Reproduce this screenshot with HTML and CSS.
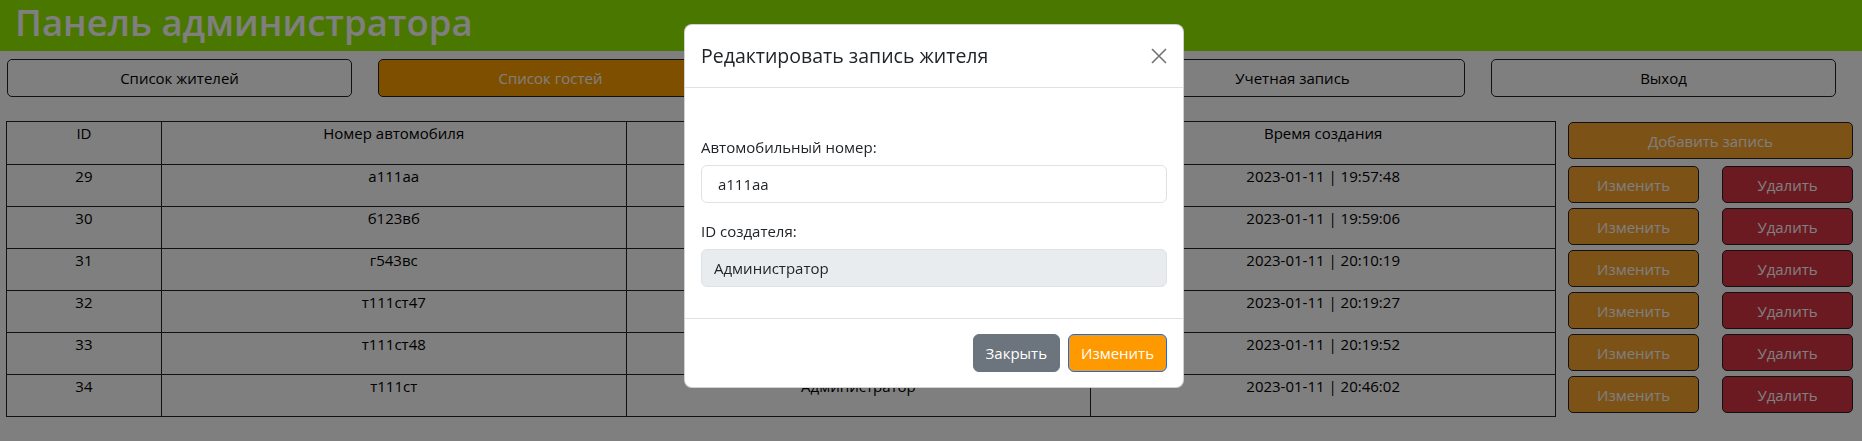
FILE: index.html
```html
<!DOCTYPE html>
<html lang="ru">
<head>
<meta charset="utf-8">
<title>Панель администратора</title>
<link rel="stylesheet" href="styles.css">
</head>
<body>
<header class="topbar"><h1 class="title">Панель администратора</h1></header>
<nav class="menu">
  <button class="menu-btn">Список жителей</button>
  <button class="menu-btn active">Список гостей</button>
  <button class="menu-btn">Администраторы</button>
  <button class="menu-btn">Учетная запись</button>
  <button class="menu-btn">Выход</button>
</nav>
<main class="content">
  <table class="records">
    <thead>
      <tr><th class="col-id">ID</th><th class="col-wide">Номер автомобиля</th><th class="col-wide">ID создателя</th><th class="col-wide">Время создания</th></tr>
    </thead>
    <tbody>
      <tr><td>29</td><td>а111аа</td><td>Администратор</td><td>2023-01-11 | 19:57:48</td></tr>
      <tr><td>30</td><td>б123вб</td><td>Администратор</td><td>2023-01-11 | 19:59:06</td></tr>
      <tr><td>31</td><td>г543вс</td><td>Администратор</td><td>2023-01-11 | 20:10:19</td></tr>
      <tr><td>32</td><td>т111ст47</td><td>Администратор</td><td>2023-01-11 | 20:19:27</td></tr>
      <tr><td>33</td><td>т111ст48</td><td>Администратор</td><td>2023-01-11 | 20:19:52</td></tr>
      <tr><td>34</td><td>т111ст</td><td>Администратор</td><td>2023-01-11 | 20:46:02</td></tr>
    </tbody>
  </table>
  <aside class="actions">
    <button class="act-btn add">Добавить запись</button>
    <div class="act-row"><button class="act-btn edit">Изменить</button><button class="act-btn del">Удалить</button></div>
    <div class="act-row"><button class="act-btn edit">Изменить</button><button class="act-btn del">Удалить</button></div>
    <div class="act-row"><button class="act-btn edit">Изменить</button><button class="act-btn del">Удалить</button></div>
    <div class="act-row"><button class="act-btn edit">Изменить</button><button class="act-btn del">Удалить</button></div>
    <div class="act-row"><button class="act-btn edit">Изменить</button><button class="act-btn del">Удалить</button></div>
    <div class="act-row"><button class="act-btn edit">Изменить</button><button class="act-btn del">Удалить</button></div>
  </aside>
</main>

<div class="backdrop"></div>
<div class="modal">
  <div class="modal-dialog">
    <div class="modal-content">
      <div class="modal-header">
        <h5 class="modal-title">Редактировать запись жителя</h5>
        <button class="btn-close" aria-label="Закрыть">
          <svg width="16" height="16" viewBox="0 0 16 16"><path d="M1 1 L15 15 M15 1 L1 15" stroke="#000" stroke-width="1.6" fill="none"/></svg>
        </button>
      </div>
      <div class="modal-body">
        <div class="field">
          <label class="form-label">Автомобильный номер:</label>
          <input class="form-control" type="text" value=" а111аа">
        </div>
        <div class="field">
          <label class="form-label">ID создателя:</label>
          <input class="form-control" type="text" value="Администратор" disabled>
        </div>
      </div>
      <div class="modal-footer">
        <button class="btn btn-secondary">Закрыть</button>
        <button class="btn btn-primary">Изменить</button>
      </div>
    </div>
  </div>
</div>
</body>
</html>
```
FILE: styles.css
```css
body {
  margin: 0;
  background: #ffffff;
  font-family: "Open Sans", "Noto Sans", sans-serif;
  color: #000;
}

.topbar {
  background: #94ee00;
  height: 51px;
}

.title {
  margin: 0;
  padding-left: 15px;
  font-size: 36.5px;
  line-height: 44px;
  font-weight: 600;
  color: #ffffff;
  white-space: nowrap;
}

.menu {
  display: grid;
  grid-template-columns: repeat(5, 1fr);
  gap: 26px;
  padding: 8px 26px 0 7px;
}

.menu-btn {
  height: 38px;
  border: 1px solid #222;
  border-radius: 5px;
  background: #ffffff;
  font-family: "Open Sans", sans-serif;
  font-size: 15px;
  color: #000;
}

.menu-btn.active {
  background: #ff9e00;
  color: #ffffff;
}

.content {
  display: flex;
  align-items: flex-start;
  gap: 12px;
  padding: 24px 9px 0 6px;
}

.records {
  width: 1550px;
  border-collapse: collapse;
  font-size: 15px;
  color: #000;
  flex: none;
}

.records th,
.records td {
  border: 1px solid #222;
  padding: 1px;
  vertical-align: top;
  text-align: center;
  line-height: 21px;
  font-weight: 500;
}

.records th {
  height: 40px;
}

.records td {
  height: 39px;
}

.col-id { width: 10%; }
.col-wide { width: 30%; }

.actions {
  width: 285px;
  flex: none;
  padding-top: 1px;
}

.act-btn {
  height: 37px;
  border: 1px solid #222;
  border-radius: 5px;
  font-family: "Open Sans", sans-serif;
  font-size: 15px;
  color: #ffffff;
}

.add {
  width: 100%;
  background: #fba42e;
  margin-bottom: 7px;
}

.act-row {
  display: flex;
  justify-content: space-between;
  margin-bottom: 5px;
}

.edit {
  width: 131px;
  background: #fba42e;
}

.del {
  width: 131px;
  background: #d83444;
}

.backdrop {
  position: fixed;
  inset: 0;
  background: rgba(0, 0, 0, 0.5);
}

.modal {
  position: fixed;
  inset: 0;
  font-family: "Open Sans", "Noto Sans", sans-serif;
  color: #212529;
}

.modal-dialog {
  width: 500px;
  margin: 24px 0 0 calc(50% - 247px);
}

.modal-content {
  background: #fff;
  border: 1px solid rgba(0, 0, 0, 0.175);
  border-radius: 8px;
}

.modal-header {
  display: flex;
  align-items: center;
  justify-content: space-between;
  padding: 16px;
  border-bottom: 1px solid #dee2e6;
}

.modal-title {
  margin: 0;
  font-size: 19.5px;
  font-weight: 500;
  line-height: 30px;
}

.btn-close {
  width: 16px;
  height: 16px;
  padding: 0;
  border: 0;
  background: none;
  opacity: 0.55;
  display: flex;
}

.modal-body {
  padding: 47px 16px 15px;
}

.field {
  margin-bottom: 16px;
}

.form-label {
  display: block;
  margin-bottom: 6px;
  font-size: 15px;
  line-height: 24px;
}

.form-control {
  display: block;
  box-sizing: border-box;
  width: 100%;
  height: 38px;
  padding: 6px 12px;
  font-family: inherit;
  font-size: 15px;
  line-height: 24px;
  color: #212529;
  background: #fff;
  border: 1px solid #dee2e6;
  border-radius: 6px;
}

.form-control:disabled {
  background: #e9ecef;
}

.modal-footer {
  display: flex;
  justify-content: flex-end;
  padding: 11px 12px;
  border-top: 1px solid #dee2e6;
}

.btn {
  margin: 4px;
  padding: 6px 12px;
  font-family: inherit;
  font-size: 15px;
  line-height: 24px;
  border-radius: 6px;
  color: #fff;
  border: 1px solid transparent;
}

.btn-secondary {
  background: #6c757d;
  border-color: #6c757d;
}

.btn-primary {
  background: #ff9900;
  border-color: #0d6efd;
}
```
